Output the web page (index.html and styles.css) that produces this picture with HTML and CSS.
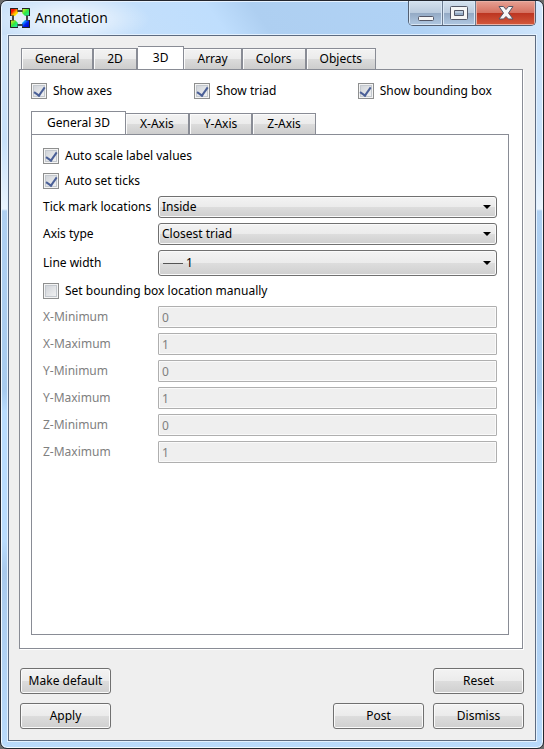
FILE: index.html
```
<!DOCTYPE html>
<html lang="en">
<head>
  <meta charset="UTF-8">
  <title>Annotation</title>
  <meta name="viewport" content="width=device-width, initial-scale=1.0">
  <link rel="stylesheet" href="styles.css">
</head>
<body>
  <div class="window">
    <header class="titlebar">
      <svg class="app-icon" width="20" height="20" viewBox="0 0 20 20" aria-hidden="true">
        <defs>
          <linearGradient id="red" x1="0" y1="0" x2="1" y2="1"><stop offset=".35" stop-color="#f81000"/><stop offset=".6" stop-color="#ffb000"/><stop offset=".8" stop-color="#fff000"/></linearGradient>
          <linearGradient id="green" x1="0" y1="0" x2="1" y2="1"><stop offset=".1" stop-color="#f0f020"/><stop offset=".5" stop-color="#30e840"/><stop offset="1" stop-color="#20f0c0"/></linearGradient>
          <linearGradient id="lime" x1="0" y1="0" x2="1" y2="1"><stop offset=".1" stop-color="#f0e020"/><stop offset=".5" stop-color="#30e840"/><stop offset="1" stop-color="#20e8f0"/></linearGradient>
          <linearGradient id="blue" x1="0" y1="0" x2="1" y2="1"><stop offset=".15" stop-color="#20c0ff"/><stop offset=".5" stop-color="#0020f0"/><stop offset="1" stop-color="#0000b0"/></linearGradient>
        </defs>
        <path d="M7 3h6M7 17h6M3 7v6M17 7v6" stroke="#444" stroke-width="2"/>
        <path d="M4 4h12v12H4z" fill="#e4eef8"/>
        <path d="M0 0h8v5L5 8H0z" fill="url(#red)"/>
        <path d="M12 0h8v8h-5l-3-3z" fill="url(#green)"/>
        <path d="M0 12h5l3 3v5H0z" fill="url(#lime)"/>
        <path d="M15 12h5v8h-8v-5z" fill="url(#blue)"/>
        <path d="M.5 8V.5H8M12 .5h7.500V8M.5 12v7.500H8M12 19.500h7.500V12" fill="none" stroke="#222"/>
        <path d="M7.500 1v3M12.500 1v3M7.500 16v3M12.500 16v3M1 7.500h3M16 7.500h3M1 12.500h3M16 12.500h3" stroke="#333" stroke-opacity=".6"/>
      </svg>
      <h1>Annotation</h1>
      <div class="caption-buttons">
        <button type="button" class="minimize" aria-label="Minimize">
          <svg width="18" height="16" viewBox="0 0 18 16"><rect x="1.500" y="11.500" width="15" height="4" rx="1" fill="#f6f6f6" stroke="#535666"/></svg>
        </button>
        <button type="button" class="maximize" aria-label="Maximize">
          <svg width="18" height="16" viewBox="0 0 18 16"><path d="M.5 2.500a1 1 0 0 1 1-1h15a1 1 0 0 1 1 1v11a1 1 0 0 1-1 1h-15a1 1 0 0 1-1-1zM4.500 5.500v5h9v-5z" fill="#f6f6f6" stroke="#535666" fill-rule="evenodd"/></svg>
        </button>
        <button type="button" class="close" aria-label="Close">
          <svg width="18" height="16" viewBox="0 0 18 16"><path d="M2 1.500h4.500L9 4.500l2.500-3H16L11.500 8l4.500 6h-4.500L9 11.500 6.500 14H2l4.500-6z" fill="#f8f8f8" stroke="#535666" stroke-linejoin="round"/></svg>
        </button>
      </div>
    </header>

    <main class="client">
      <div class="tabs" role="tablist">
        <button type="button" role="tab">General</button>
        <button type="button" role="tab">2D</button>
        <button type="button" role="tab" class="active" aria-selected="true">3D</button>
        <button type="button" role="tab">Array</button>
        <button type="button" role="tab">Colors</button>
        <button type="button" role="tab">Objects</button>
      </div>

      <section class="panel">
        <div class="show-options">
          <label class="check"><input type="checkbox" checked>Show axes</label>
          <label class="check"><input type="checkbox" checked>Show triad</label>
          <label class="check"><input type="checkbox" checked>Show bounding box</label>
        </div>

        <div class="tabs sub-tabs" role="tablist">
          <button type="button" role="tab" class="active" aria-selected="true">General 3D</button>
          <button type="button" role="tab">X-Axis</button>
          <button type="button" role="tab">Y-Axis</button>
          <button type="button" role="tab">Z-Axis</button>
        </div>

        <form class="sub-panel">
          <label class="check"><input type="checkbox" checked>Auto scale label values</label>
          <label class="check"><input type="checkbox" checked>Auto set ticks</label>

          <label for="ticks">Tick mark locations</label>
          <div class="combo"><select id="ticks"><option>Inside</option></select></div>
          <label for="axis-type">Axis type</label>
          <div class="combo"><select id="axis-type"><option>Closest triad</option></select></div>
          <label for="line-width">Line width</label>
          <div class="combo line-combo"><select id="line-width"><option>1</option></select></div>

          <label class="check"><input type="checkbox">Set bounding box location manually</label>

          <label class="off" for="xmin">X-Minimum</label>
          <input type="text" id="xmin" value="0" disabled>
          <label class="off" for="xmax">X-Maximum</label>
          <input type="text" id="xmax" value="1" disabled>
          <label class="off" for="ymin">Y-Minimum</label>
          <input type="text" id="ymin" value="0" disabled>
          <label class="off" for="ymax">Y-Maximum</label>
          <input type="text" id="ymax" value="1" disabled>
          <label class="off" for="zmin">Z-Minimum</label>
          <input type="text" id="zmin" value="0" disabled>
          <label class="off" for="zmax">Z-Maximum</label>
          <input type="text" id="zmax" value="1" disabled>
        </form>
      </section>

      <footer class="actions">
        <div class="action-row">
          <button type="button">Make default</button>
          <button type="button" class="push">Reset</button>
        </div>
        <div class="action-row">
          <button type="button">Apply</button>
          <button type="button" class="push">Post</button>
          <button type="button">Dismiss</button>
        </div>
      </footer>
    </main>
  </div>
</body>
</html>
```
FILE: styles.css
```
* {
  box-sizing: border-box;
}
body {
  margin: 0;
  background: #6b6b6b;
  color: #000;
  font: 12px/16px "Noto Sans", Tahoma, sans-serif;
}
button, input, select {
  font: inherit;
  color: inherit;
  margin: 0;
}

/* window frame */
.window {
  display: flex;
  flex-direction: column;
  min-height: 100vh;
  padding: 0 7px 7px;
  border: 1px solid #23262e;
  border-radius: 7px;
  background:
    linear-gradient(to bottom, #cfe4fa 0, #c8e1fa 140px, #eaf4fe 208px, #afd0f2 210px, #a8cbee 390px, #b9dcfd 410px, #b9dcfd 540px, #a9caed 570px, #b9dafb 100%);
  box-shadow: inset 0 0 0 1px #f0f8ff;
}
.titlebar {
  display: flex;
  height: 34px;
  margin: 0 -6px;
  padding: 0 6px 0 7px;
  border-radius: 6px 6px 0 0;
  background:
    radial-gradient(ellipse 80px 26px at 68px 18px, rgba(255, 255, 255, 0.6) 30%, transparent),
    linear-gradient(55deg, #c9e0f8 0, #bfdefd 40%, #aecff1 48%, #b0d2f5 75%, #d4e8fc 100%);
  box-shadow: inset 0 1px #e6f2ff;
}
.app-icon {
  margin: 7px 5px 0 1px;
}
h1 {
  margin: 7px 0 0;
  font: 14px/20px "Open Sans", "Noto Sans", sans-serif;
}
.caption-buttons {
  display: flex;
  height: 25px;
  margin-left: auto;
  border: 1px solid #535f72;
  border-top: 0;
  border-radius: 0 0 5px 5px;
  overflow: hidden;
}
.caption-buttons button {
  display: flex;
  align-items: center;
  justify-content: center;
  width: 34px;
  padding: 0;
  border: 0;
  border-right: 1px solid #6b7b90;
  background: linear-gradient(#d5e2ef 0, #b9cadd 50%, #93a9c4 50%, #b0c8e2 100%);
  box-shadow: inset 0 0 0 1px #d9e7f5;
}
.caption-buttons .maximize {
  width: 33px;
}
.caption-buttons .close {
  width: 59px;
  border-right: 0;
  background: linear-gradient(#e6a194 0, #d5705f 50%, #bc3420 50%, #d3593c 100%);
  box-shadow: inset 0 0 0 1px #eab0a4;
}

.client {
  display: flex;
  flex: 1;
  flex-direction: column;
  padding: 10px 12px 11px 10px;
  border: 1px solid #5d6b80;
  background: #efefef;
  box-shadow: 0 0 0 1px #e3f1ff;
}

/* tabs */
.tabs {
  display: flex;
  align-items: flex-end;
  height: 24px;
  padding-left: 2px;
  margin-bottom: -1px;
}
.tabs button {
  height: 22px;
  padding: 0 13px;
  border: 1px solid #898c95;
  border-left-width: 0;
  background: linear-gradient(#f3f3f3 0, #ebebeb 50%, #dcdcdc 50%, #cdcdcd 100%);
  box-shadow: inset 1px 1px #fbfbfb;
}
.tabs button:first-child {
  border-left-width: 1px;
}
.tabs button:not(.active):not(:last-child) {
  border-right-width: 2px;
}
.sub-tabs {
  padding-left: 0;
}
.sub-tabs button {
  padding: 0 14px;
}
.tabs .active {
  height: 24px;
  padding: 0 15px 1px;
  border-bottom-color: #fff;
  background: #fff;
  box-shadow: none;
}
.panel, .sub-panel {
  border: 1px solid #898c95;
  background: #fff;
}
.panel {
  display: flex;
  flex: 1;
  flex-direction: column;
  padding: 11px 13px 13px 11px;
  box-shadow: 1px 1px #fff;
}
.show-options {
  display: grid;
  grid-template-columns: repeat(3, 1fr);
  gap: 12px;
  margin-bottom: 10px;
}
.sub-panel {
  display: grid;
  flex: 1;
  grid-template-columns: 112px 1fr;
  gap: 5px 3px;
  align-content: start;
  align-items: center;
  padding: 11px;
}

/* form controls */
label {
  white-space: nowrap;
}
.check {
  display: flex;
  align-items: center;
  gap: 6px;
  height: 20px;
}
.sub-panel .check {
  grid-column: 1 / -1;
}
.check input {
  appearance: none;
  display: flex;
  align-items: center;
  justify-content: center;
  width: 16px;
  height: 16px;
  border: 1px solid #8e8f8f;
  background: linear-gradient(135deg, #cbcfd5, #f6f6f6);
  box-shadow: inset 0 0 0 1px #f4f4f4, inset 0 0 0 2px #c3c8ce;
}
.check input:checked::before {
  content: "";
  width: 5px;
  height: 9px;
  margin-bottom: 2px;
  border: solid #4a5f97;
  border-width: 0 2px 2px 0;
  transform: rotate(35deg);
}
.combo {
  position: relative;
}
.combo select {
  appearance: none;
  display: block;
  width: 100%;
  height: 22px;
  padding: 0 20px 0 3px;
  border: 1px solid #707070;
  border-radius: 3px;
  background: linear-gradient(#f3f3f3 0, #ebebeb 50%, #dddddd 50%, #cfcfcf 100%);
  box-shadow: inset 0 0 0 1px #fafafa;
}
.combo::after {
  content: "";
  position: absolute;
  top: 50%;
  right: 6px;
  margin-top: -2px;
  border: 4px solid transparent;
  border-top-color: #000;
  border-bottom: 0;
  pointer-events: none;
}
.combo.line-combo select {
  height: 26px;
  padding-left: 27px;
}
.line-combo::before {
  content: "";
  position: absolute;
  top: 50%;
  left: 5px;
  width: 20px;
  height: 1px;
  background: #555;
}
.off {
  color: #808080;
}
input[type="text"] {
  width: 100%;
  height: 22px;
  padding: 0 3px;
  border: 1px solid #afafaf;
  border-radius: 1px;
  background: #efefef;
  color: #808080;
  box-shadow: inset 0 0 0 1px #fafafa;
}

/* bottom buttons */
.actions {
  display: grid;
  gap: 9px;
  margin: 19px -1px 0 1px;
}
.action-row {
  display: flex;
  gap: 9px;
}
.action-row button {
  width: 91px;
  height: 26px;
  padding: 0;
  border: 1px solid #707070;
  border-radius: 3px;
  background: linear-gradient(#f3f3f3 0, #ebebeb 50%, #dddddd 50%, #cfcfcf 100%);
  box-shadow: inset 0 0 0 1px #fafafa;
}
.action-row .push {
  margin-left: auto;
}
```
